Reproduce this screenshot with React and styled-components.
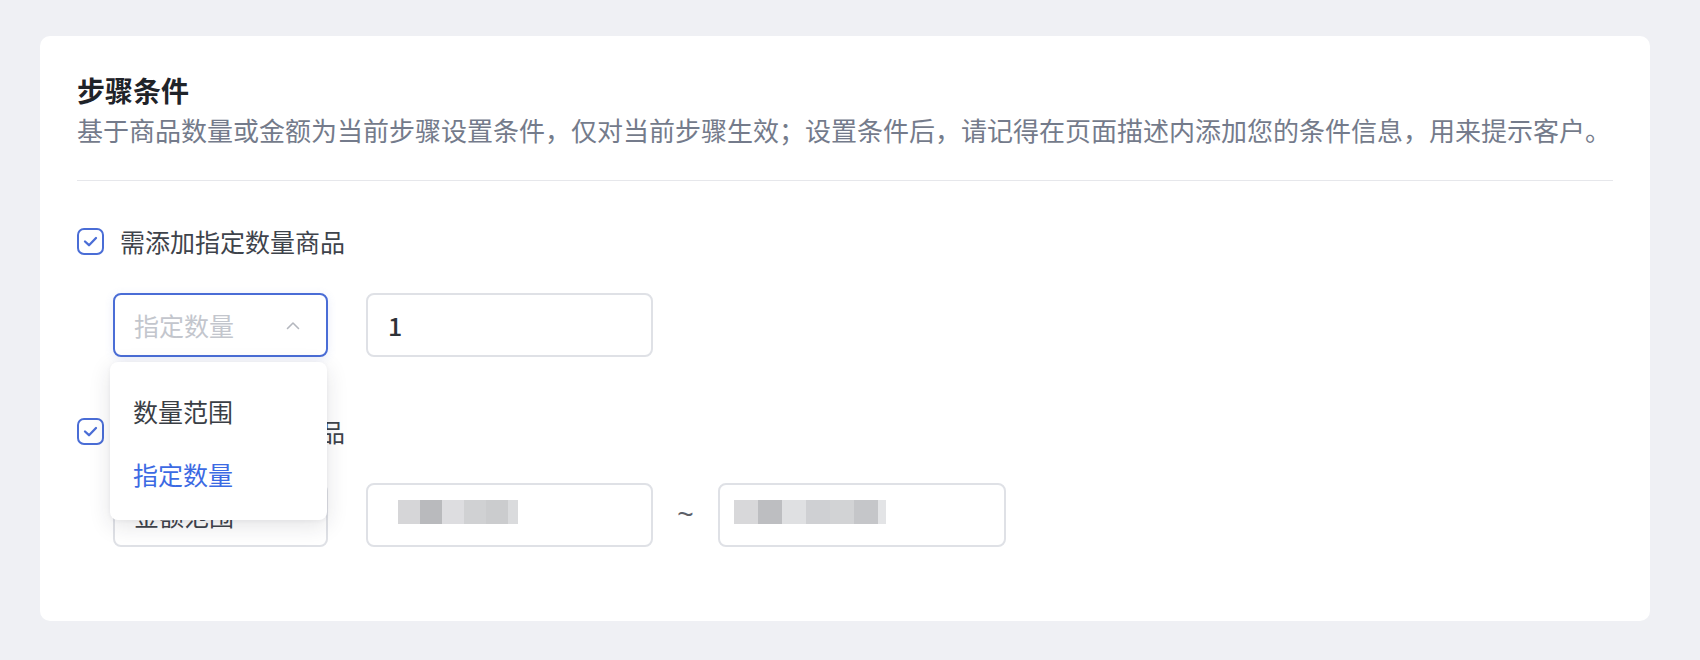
import styled, { createGlobalStyle } from "styled-components";

const GlobalStyle = createGlobalStyle`
    html, body {
        margin: 0;
        padding: 0;
        background: #eff0f4;
    }
    * {
        box-sizing: border-box;
    }
    body {
        font-family: "Noto Sans CJK SC", "Noto Sans", sans-serif;
    }
`;

const Page = styled.div`
    width: 1700px;
    height: 660px;
    padding: 36px 50px 0 40px;
`;

const Card = styled.div`
    background: #ffffff;
    border-radius: 10px;
    height: 585px;
    padding: 34px 37px 0 37px;
`;

const Title = styled.h2`
    margin: 0;
    font-size: 28px;
    line-height: 40px;
    font-weight: 700;
    color: #1f2329;
`;

const Desc = styled.p`
    margin: 0;
    font-size: 26px;
    line-height: 40px;
    color: #747b8b;
    white-space: nowrap;
`;

const Divider = styled.div`
    height: 1px;
    background: #e6e7eb;
    margin-top: 30px;
`;

const Condition = styled.div`
    margin-top: ${(p) => p.$top}px;
`;

const CheckRow = styled.label`
    display: flex;
    align-items: center;
    gap: 16px;
    height: 40px;
    font-size: 25px;
    color: #3e434b;
`;

const Box = styled.svg`
    width: 27px;
    height: 27px;
    flex: none;
`;

const FieldRow = styled.div`
    display: flex;
    align-items: center;
    margin-top: 32px;
    padding-left: 36px;
`;

const SelectWrap = styled.div`
    position: relative;
    width: 215px;
    flex: none;
`;

const Select = styled.div`
    height: 64px;
    border: 2px solid ${(p) => (p.$open ? "#4a6dd6" : "#dfe1e6")};
    border-radius: 8px;
    background: #fff;
    display: flex;
    align-items: center;
    justify-content: space-between;
    padding: 0 26px 0 19px;
    font-size: 25px;
    color: ${(p) => (p.$placeholder ? "#c3c6cd" : "#3e434b")};
    box-shadow: ${(p) =>
        p.$open ? "0 2px 10px rgba(74, 109, 214, 0.12)" : "none"};
`;

const Menu = styled.ul`
    position: absolute;
    top: 69px;
    left: -3px;
    width: 217px;
    margin: 0;
    padding: 17px 0 15px;
    list-style: none;
    background: #fff;
    border-radius: 8px;
    box-shadow: 0 6px 22px rgba(30, 35, 50, 0.12),
        0 1px 4px rgba(30, 35, 50, 0.05);
    z-index: 2;
`;

const MenuItem = styled.li`
    height: 63px;
    display: flex;
    align-items: center;
    padding-left: 23px;
    font-size: 25px;
    color: ${(p) => (p.$active ? "#3c6ae3" : "#3a3e45")};
`;

const Input = styled.div`
    width: ${(p) => p.$w}px;
    height: 64px;
    margin-left: ${(p) => p.$gap}px;
    border: 2px solid #dfe1e6;
    border-radius: 8px;
    display: flex;
    align-items: center;
    padding-left: ${(p) => p.$pad || 20}px;
    font-size: 25px;
    font-weight: 500;
    color: #2e3238;
`;

const Tilde = styled.span`
    width: 65px;
    text-align: center;
    font-family: "Liberation Sans", sans-serif;
    font-size: 28px;
    color: #5c6068;
`;

const Mosaic = styled.div`
    display: flex;
    margin-bottom: 6px;
`;

const Cell = styled.span`
    display: block;
    width: ${(p) => p.$w || 24}px;
    height: 24px;
    background: ${(p) => p.$shade};
`;

const Chevron = () => (
    <svg width="14" height="9" viewBox="0 0 14 9">
        <polyline
            points="1.5,7.5 7,2 12.5,7.5"
            fill="none"
            stroke="#b4b7be"
            strokeWidth="1.6"
            strokeLinecap="round"
            strokeLinejoin="round"
        />
    </svg>
);

const Checkbox = () => (
    <Box viewBox="0 0 27 27">
        <rect
            x="1"
            y="1"
            width="25"
            height="25"
            rx="6"
            fill="#fff"
            stroke="#4a6dd6"
            strokeWidth="2"
        />
        <polyline
            points="8,13.5 12,17.2 19,10"
            fill="none"
            stroke="#4a6dd6"
            strokeWidth="2.3"
            strokeLinecap="round"
            strokeLinejoin="round"
        />
    </Box>
);

const blurA = [
    ["#d6d6d8", 22],
    ["#b9babd", 22],
    ["#dddde0", 22],
    ["#d0d1d3", 22],
    ["#cbccce", 22],
    ["#dadbdd", 10],
];

const blurB = [
    ["#d8d8da"],
    ["#bdbec1"],
    ["#dfe0e2"],
    ["#cfd0d3"],
    ["#d2d3d5"],
    ["#c5c6c9"],
    ["#e3e4e6", 8],
];

const Blurred = ({ cells }) => (
    <Mosaic>
        {cells.map(([shade, w], i) => (
            <Cell key={i} $shade={shade} $w={w} />
        ))}
    </Mosaic>
);

const App = () => {
    return (
        <>
            <GlobalStyle />
            <Page>
                <Card>
                    <Title>步骤条件</Title>
                    <Desc>
                        基于商品数量或金额为当前步骤设置条件，仅对当前步骤生效；设置条件后，请记得在页面描述内添加您的条件信息，用来提示客户。
                    </Desc>
                    <Divider />

                    <Condition $top={40}>
                        <CheckRow>
                            <Checkbox />
                            需添加指定数量商品
                        </CheckRow>
                        <FieldRow>
                            <SelectWrap>
                                <Select $open $placeholder>
                                    指定数量
                                    <Chevron />
                                </Select>
                                <Menu>
                                    <MenuItem>数量范围</MenuItem>
                                    <MenuItem $active>指定数量</MenuItem>
                                </Menu>
                            </SelectWrap>
                            <Input $w={287} $gap={38}>
                                1
                            </Input>
                        </FieldRow>
                    </Condition>

                    <Condition $top={54}>
                        <CheckRow>
                            <Checkbox />
                            需添加指定金额商品
                        </CheckRow>
                        <FieldRow>
                            <SelectWrap>
                                <Select>
                                    金额范围
                                    <Chevron />
                                </Select>
                            </SelectWrap>
                            <Input $w={287} $gap={38} $pad={30}>
                                <Blurred cells={blurA} />
                            </Input>
                            <Tilde>~</Tilde>
                            <Input $w={288} $gap={0} $pad={14}>
                                <Blurred cells={blurB} />
                            </Input>
                        </FieldRow>
                    </Condition>
                </Card>
            </Page>
        </>
    );
};

export default App;
